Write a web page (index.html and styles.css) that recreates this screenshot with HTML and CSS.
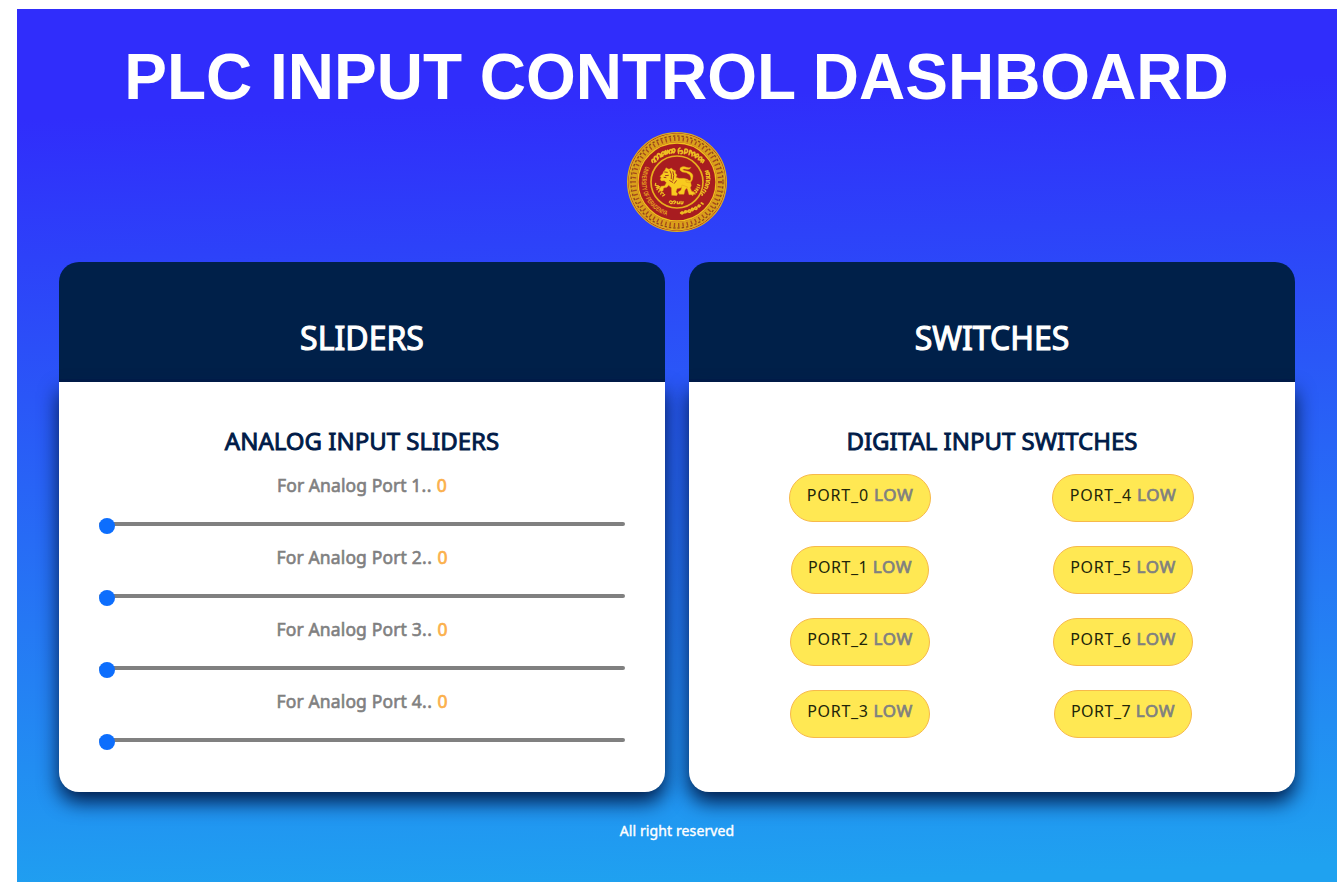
FILE: index.html
```html
<!DOCTYPE html>
<html lang="en">
<head>
<meta charset="utf-8">
<title>PLC Input Control Dashboard</title>
<link rel="stylesheet" href="styles.css">
</head>
<body>
<div class="dashboard">
  <h1 class="title">PLC INPUT CONTROL DASHBOARD</h1>
  <svg class="seal" viewBox="30 30 300 300">
    <defs>
      <path id="arc-left" d="M86 132A105 105 0 0 0 172 285"/>
    </defs>
    <circle cx="180" cy="180" r="148" fill="#a81c20" stroke="#d9ad21" stroke-width="4"/>
    <circle cx="180" cy="180" r="131" fill="none" stroke="#d9a01b" stroke-width="24"/>
    <circle cx="180" cy="180" r="138" fill="none" stroke="#8f451c" stroke-width="4" stroke-dasharray="7 6"/>
    <circle cx="180" cy="180" r="129" fill="none" stroke="#a6491b" stroke-width="12" stroke-dasharray="4 9"/>
    <circle cx="180" cy="180" r="144" fill="none" stroke="#e2b51f" stroke-width="3"/>
    <circle cx="180" cy="180" r="117" fill="none" stroke="#f0c21e" stroke-width="4"/>
    <circle cx="180" cy="180" r="78" fill="none" stroke="#e7ae1e" stroke-width="5"/>
    <text class="seal-text"><textPath href="#arc-left" textLength="184" lengthAdjust="spacingAndGlyphs">UNIVERSITY OF PERADENIYA</textPath></text>
    <g fill="none" stroke="#edbd22" stroke-width="5" stroke-linecap="round" stroke-linejoin="round">
      <path d="M107 121q-5-8 1-9q7 1 5 8M117 118q-10-11-2-15q8 0 7 10M124 108q-7-11 1-13q7 2 5 10q5-1 5-9M137 102q-7-10 1-13q7 3 2 9M146 97q-6-8 0-11l4 9q5-3 2-10M158 94q-4-10 4-11q6 5 1 10M168 92l-2-10q8-4 8 4l-3 6"/>
      <path d="M185 94q-4-13 4-16M187 87l8-1q4 8-3 9M202 95l2-13q8-2 8 6q-5 8-9 2M216 98l3-13q7 2 4 8M225 102q0-12 8-11q3 5-2 10M235 107q1-13 9-10q2 7-5 8M244 113q2-11 10-7q1 8-6 8M252 120q4-11 9-5l-4 7"/>
      <path stroke-width="4" d="M265 148l8-2m-6 8q8-8 10 0m-9 4q9-5 10 2m-10 4h10m-9 5q10-4 10 2m-11 4l10 1m-10 4q10-1 9 4m-11 2l9 2m-10 3q10 0 7 5m-9 1l7 3m-10 3q9 4 5 6m-9 0l6 4m-9 1q6 4 2 6"/>
      <path d="M191 273q5-7 7 0q-3 5-7 0M201 273q2-9 9-5l-4 4M213 269q2-9 8-3q0 6-6 4M223 265q1-10 7-4l-3 5M232 260q3-9 8-2q-1 6-6 3M243 253q1-7 7-2l-4 4M253 243l5 3"/>
      <path stroke-width="4" d="M116 184l-1 6 9 2m-6 5l10-3m-8 9q6-9 11-1m-6 8q4-10 9-3m-3 9q2-7 8-2m-2 8l6-4M242 188l6 3m-8 4l8 3m-11 3q9 1 5 4m-9 0q10 4 4 7m-9-2l6 6m-11-2l4 5M157 241q3-8 8-2q3 8-5 5m8-5q6-5 8 1l-5 5m10-6v6h6v-5m5-2v7q6 2 6-6"/>
    </g>
    <g fill="#f8cb1f" stroke="#dc9418" stroke-width="1.2" stroke-linejoin="round">
      <path d="M147 137l9 5 7-4 6 6 7 2-1 7 5 6-3 7 9 3 15 0 11 3 9 8 2 11-3 6 4 11 8 4-2 6-14 0-5-17-9-9-12 6-10 2-3 10 5 5-3 6-15-1-1-23-8-7-5 6-10 2-2 9-8 1-3-7 5-8 11-2 5-9-6-6-9 1-4-6 4-3-4-5 8-8 3-7 4-4z"/>
      <path d="M195 189l-3 15-9 7 4 6 14 0 3-13 8-9z"/>
      <path d="M206 175q24 6 12-17-8-7-22-8-11-6-6-13 9-7 19-1 7 2 13 0-3 9-15 6-7-3-10 1 3 3 13 4 17 4 18 15-1 25-20 19z"/>
    </g>
    <g fill="none" stroke="#a53b1d" stroke-width="3" stroke-linecap="round">
      <path d="M143 150l8 1M145 161l9-1M159 146q7 10 4 24M168 149q5 11 0 26M158 176l9 5M178 176l-6 8M141 166l6 1"/>
    </g>
  </svg>
  <main class="cards">
    <section class="card">
      <header class="card-head"><h2>SLIDERS</h2></header>
      <div class="card-body">
        <h3>ANALOG INPUT SLIDERS</h3>
        <div class="slider"><label class="one">For Analog Port 1<i>..</i> <b>0</b></label><div class="track"><span></span></div></div>
        <div class="slider"><label>For Analog Port 2<i>..</i> <b>0</b></label><div class="track"><span></span></div></div>
        <div class="slider"><label>For Analog Port 3<i>..</i> <b>0</b></label><div class="track"><span></span></div></div>
        <div class="slider"><label>For Analog Port 4<i>..</i> <b>0</b></label><div class="track"><span></span></div></div>
      </div>
    </section>
    <section class="card">
      <header class="card-head"><h2>SWITCHES</h2></header>
      <div class="card-body">
        <h3>DIGITAL INPUT SWITCHES</h3>
        <div class="ports">
          <button class="port w142">PORT_0 <b>LOW</b></button><button class="port w142">PORT_4 <b>LOW</b></button>
          <button class="port w138">PORT_1 <b>LOW</b></button><button class="port w140">PORT_5 <b>LOW</b></button>
          <button class="port w140">PORT_2 <b>LOW</b></button><button class="port w140">PORT_6 <b>LOW</b></button>
          <button class="port w140">PORT_3 <b>LOW</b></button><button class="port w138">PORT_7 <b>LOW</b></button>
        </div>
      </div>
    </section>
  </main>
  <footer class="footer">All right reserved</footer>
</div>
</body>
</html>
```
FILE: styles.css
```css
* { box-sizing: border-box; }
body { margin: 0; padding: 9px 2px 9px 17px; background: #fff; font-family: "Noto Sans", sans-serif; }
.dashboard { height: 873px; padding: 32px 42px 0; display: flex; flex-direction: column; align-items: center; background: linear-gradient(178deg, #302dfb 12%, #1fa2f0 98%); }
.title { margin: 0 1px 0 0; height: 72px; font: bold 64px/72px "Liberation Sans", Arial, sans-serif; color: #fff; white-space: nowrap; }
.seal { display: block; flex: none; width: 100px; height: 100px; margin-top: 19px; }
.seal-text { font: bold 20px "Liberation Sans", sans-serif; fill: #e9a321; }
.cards { display: grid; grid-template-columns: 1fr 1fr; gap: 24px; width: 100%; margin-top: 30px; }
.card { height: 530px; text-align: center; }
.card-head { height: 120px; padding-top: 52px; background: #002049; border-bottom: 3px solid #001b48; border-radius: 20px 20px 0 0; color: #fff; }
.card-head h2 { margin: 0; font-size: 32px; line-height: 48px; font-weight: 400; -webkit-text-stroke: 1.1px #fff; }
.card-body { height: 410px; padding: 40px; background: #fff; border-radius: 0 0 20px 20px; box-shadow: 0 10px 20px #001b48; }
.card-body h3 { margin: 0; font-size: 24px; line-height: 38px; font-weight: 400; color: #001b48; -webkit-text-stroke: 0.9px #001b48; }
.slider { height: 72px; padding-top: 12px; }
.slider label { display: block; font-size: 17.5px; line-height: 27px; padding-bottom: 1px; letter-spacing: 0.15px; color: gray; -webkit-text-stroke: 0.6px gray; white-space: nowrap; }
.slider .one { letter-spacing: 0.08px; }
.slider i { font-style: normal; letter-spacing: 0.7px; }
.slider b { font-weight: 400; color: #fbb04c; -webkit-text-stroke: 0.7px #fbb04c; }
.track { height: 4px; margin-top: 22px; display: flex; background: gray; border-radius: 2px; }
.track span { width: 16px; height: 16px; margin-top: -4px; border-radius: 50%; background: #0d6efd; }
.ports { display: grid; grid-template-columns: 263px 263px; grid-auto-rows: 48px; row-gap: 24px; justify-items: center; margin-left: -1px; padding-top: 14px; }
.port { height: 48px; padding: 0 0 8px 1px; border: 1px solid #f7b94b; border-radius: 25px; background: #ffe853; color: #212509; font: 16px "Noto Sans", sans-serif; letter-spacing: 0.7px; white-space: nowrap; }
.port b { font-weight: 400; font-size: 17px; letter-spacing: 0.6px; color: gray; -webkit-text-stroke: 0.7px gray; }
.w142 { width: 142px; letter-spacing: 0.85px; }
.w140 { width: 140px; }
.w138 { width: 138px; letter-spacing: 0.5px; }
.footer { margin-top: 28px; color: #fff; font-size: 14px; line-height: 21px; letter-spacing: 0.12px; -webkit-text-stroke: 0.4px #fff; }
```
